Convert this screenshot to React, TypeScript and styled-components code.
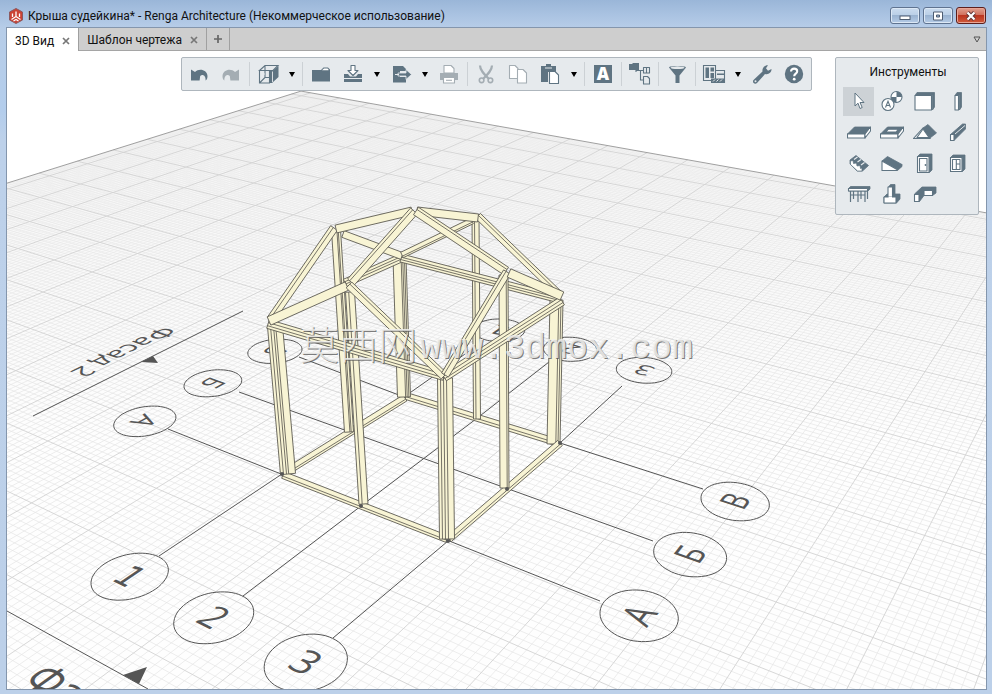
import React from 'react';
import styled, { createGlobalStyle } from 'styled-components';

const INK = '#5f7482';
const MUTED = '#a4adb3';

const GlobalStyle = createGlobalStyle`
  * { box-sizing: border-box; }
  body { margin: 0; font-family: Roboto, "Noto Sans", sans-serif; font-size: 12px; color: #111; }
  button { font: inherit; color: inherit; }
`;

const Frame = styled.div`
  height: 100vh;
  display: flex;
  flex-direction: column;
  padding: 0 5px 4px 6px;
  background: linear-gradient(180deg, #9ab6d8 0, #a9c2e1 14px, #b7cde8 28px, #b3cdec 110px, #bdd1ea 140px, #bcd0e9 100%);
`;

const TitleBar = styled.header`
  height: 27px;
  flex: none;
  display: flex;
  align-items: center;
  gap: 4px;
  padding: 4px 1px 0 2px;
`;

const Title = styled.h1`
  flex: 1;
  margin: 0;
  font-size: 12px;
  font-weight: 400;
  line-height: 20px;
  white-space: nowrap;
`;

const WindowButtons = styled.div`
  display: flex;
  gap: 3px;
`;

const WindowButton = styled.button<{ $danger?: boolean }>`
  width: 30px;
  height: 17px;
  padding: 0;
  display: grid;
  place-items: center;
  border: 1px solid ${p => (p.$danger ? '#5c1f1c' : '#5f7390')};
  border-radius: 3px;
  box-shadow: inset 0 0 0 1px ${p => (p.$danger ? '#e9a595' : '#dce8f5')};
  background: ${p => p.$danger
    ? 'linear-gradient(180deg, #dfa090 0, #d0705c 48%, #bb3520 50%, #cf5a3b 100%)'
    : 'linear-gradient(180deg, #cbdcef 0, #bacfe7 48%, #9ab3d1 50%, #b4cbe6 100%)'};
`;

const Client = styled.div`
  flex: 1;
  min-height: 0;
  display: flex;
  flex-direction: column;
  border: 1px solid #8496ad;
  background: #fff;
`;

const TabBar = styled.nav`
  height: 23px;
  flex: none;
  display: flex;
  background: #cecece;
  border-bottom: 1px solid #a5a5a5;
`;

const Tab = styled.div<{ $active?: boolean }>`
  height: ${p => (p.$active ? 23 : 22)}px;
  display: flex;
  align-items: center;
  gap: 4px;
  padding: 2px 4px 0 8px;
  border-right: 1px solid #a0a0a0;
  background: ${p => (p.$active ? '#fff' : 'transparent')};
`;

const PlainButton = styled.button`
  padding: 0;
  border: 0;
  background: none;
  line-height: 20px;
  white-space: nowrap;
`;

const CloseButton = styled(PlainButton)`
  width: 16px;
  height: 16px;
  display: grid;
  place-items: center;
`;

const AddTab = styled(PlainButton)`
  width: 23px;
  display: grid;
  place-items: center;
  border-right: 1px solid #a0a0a0;
`;

const TabMenu = styled(PlainButton)`
  width: 19px;
  margin-left: auto;
  display: grid;
  place-items: center;
`;

const Viewport = styled.main`
  flex: 1;
  min-height: 0;
  display: grid;
  grid-template: minmax(0, 1fr) / minmax(0, 1fr);
`;

const Scene = styled.svg`
  grid-area: 1 / 1;
  width: 100%;
  height: 100%;
  display: block;
`;

const Overlay = styled.div`
  grid-area: 1 / 1;
  z-index: 1;
  display: flex;
  align-items: flex-start;
  justify-content: flex-end;
  gap: 23px;
  padding: 6px 7px;
`;

const Toolbar = styled.div`
  height: 34px;
  display: flex;
  align-items: center;
  padding: 0 1px;
  border: 1px solid #aeb6bd;
  border-radius: 2px;
  background: #e6eaed;
`;

const ToolButton = styled.button<{ $narrow?: boolean }>`
  width: ${p => (p.$narrow ? 16 : 32)}px;
  height: 30px;
  flex: none;
  padding: 0;
  display: grid;
  place-items: center;
  border: 0;
  background: none;
`;

const Separator = styled.span`
  width: 1px;
  height: 24px;
  flex: none;
  margin: 0 2px;
  background: #ccd1d5;
`;

const Palette = styled.section`
  padding: 0 5px 5px 7px;
  border: 1px solid #aeb6bd;
  border-radius: 2px;
  background: #e6eaed;
`;

const PaletteTitle = styled.h2`
  margin: 0;
  font-size: 12px;
  font-weight: 400;
  line-height: 29px;
  text-align: center;
`;

const PaletteGrid = styled.div`
  display: grid;
  grid-template-columns: repeat(4, 31px);
  grid-auto-rows: 29px;
  gap: 2px;
`;

const PaletteButton = styled.button<{ $selected?: boolean }>`
  padding: 0;
  display: grid;
  place-items: center;
  border: 0;
  background: ${p => (p.$selected ? '#cdd2d6' : 'none')};
`;

/* ---------- icons ---------- */

const Icon = ({ children, color = INK }: { children: React.ReactNode; color?: string }) => (
  <svg width="24" height="24" viewBox="0 0 24 24" fill={color} stroke="none" color={color} aria-hidden="true">{children}</svg>
);
const L = { fill: 'none', stroke: 'currentColor', strokeWidth: 1.1 };
const W = { fill: '#fff', stroke: 'currentColor', strokeWidth: 1.1, strokeLinejoin: 'round' as const };
const F = { fill: 'currentColor', stroke: 'currentColor', strokeWidth: 0.8, strokeLinejoin: 'round' as const };

const arcArrow = 'M4 7.5L8 10C12 6 20 7.5 20.5 14C20.5 16 20 17.5 18.6 18.6C19 13.5 15.5 11.5 13.2 14L12.6 18.6H4Z';

const icons: Record<string, React.ReactNode> = {
  undo: <Icon><path d={arcArrow} /></Icon>,
  redo: <Icon color={MUTED}><path d={arcArrow} transform="matrix(-1 0 0 1 24 0)" /></Icon>,
  view: <Icon><path d="M3.5 8.5L9 3.5H22L17 8.5ZM3.5 8.5H13.5V21H3.5ZM9 3.5V15.500L3.500 21M9 15.500H14" {...L} /><path d="M14 9L16.500 9L22.500 4V15L16 21H13.500Z" /><path d="M16.500 9.500V20M5 12H9" stroke="#e6eaed" strokeWidth="0.9" /></Icon>,
  open: <Icon><path d="M3 8H12L14.500 5.500H19L21 7.500V19.500H3Z" /><path d="M13 8.200L15 6.500H18.500L19.500 7.500V8.200Z" fill="#fff" /></Icon>,
  save: <Icon><path d="M3 12H7L9 14.500H15L17 12H21V20H3Z" /><path d="M3 16.500H21" stroke="#e6eaed" strokeWidth="1" /><path d="M10 3.500H14V8.500H17L12 13.500L7 8.500H10Z" {...W} /></Icon>,
  exp: <Icon><path d="M4 4H14L17 7V9H11V15H17V20.500H4Z" /><path d="M9 11H17V7.500L22.500 12.500L17 17.500V14H9Z" stroke="#e6eaed" strokeWidth="0.800" /><path d="M6 12.500H10" stroke="#e6eaed" /></Icon>,
  print: <Icon color={MUTED}><path d="M3 11H21V18H3Z" /><path d="M7 11V3.500H14L17 6.500V11Z" {...W} /><path d="M6.500 15.500H17.500V21H6.500Z" {...W} /><path d="M9 18.300H15" {...L} /></Icon>,
  cut: <Icon color={MUTED}><path d="M6 3.500C6 8 10 12 14.500 16.500M18 3.500C18 8 14 12 9.500 16.500" {...L} strokeWidth="2.200" /><circle cx="7.600" cy="18.300" r="2.300" {...L} strokeWidth="1.600" /><circle cx="16.400" cy="18.300" r="2.300" {...L} strokeWidth="1.600" /></Icon>,
  copy: <Icon color={MUTED}><path d="M3.500 3.500H9L12 6.500V16.500H3.500Z" {...W} /><path d="M11.500 7.500H17L20.500 11V21H11.500Z" {...W} /></Icon>,
  paste: <Icon><path d="M3 4H8V2H13V4H18V10H10V20H3Z" /><path d="M7 6H14" stroke="#e6eaed" /><path d="M11.500 9.500H17L20.500 13V21.500H11.500Z" {...W} /></Icon>,
  font: <Icon><path d="M3 3H21V21H3Z" /><text x="12" y="18" textAnchor="middle" fill="#fff" fontSize="17" fontWeight="800" fontFamily="Open Sans, sans-serif">A</text></Icon>,
  tree: <Icon><path d="M1 2H4L5 1H11V8H1Z" /><path d="M8 8V10M8 8.500H15" {...L} /><path d="M12.500 8.500V18H15.500" {...L} /><path d="M15.500 5.500H21.500V11H15.500ZM18.500 5.500V11M15.500 14.500H19.500L21.500 16.500V22H15.500Z" {...W} fill="none" /></Icon>,
  filter: <Icon><path d="M4 5.500C4 3.500 21 3.500 21 5.500L14.500 13.500V21H10.500V13.500Z" /><ellipse cx="12.500" cy="5.700" rx="7" ry="1.400" fill="#e6eaed" /></Icon>,
  template: <Icon><path d="M1.500 3.500H13.500V18.500H1.500ZM14 8.500H22.500V20.500H9" {...L} /><path d="M3.500 5.500H7V16H3.500ZM8.500 5.500H12V9.500H8.500ZM8.500 11H12V16H8.500ZM15 11.500H22V13H15ZM9 16.500H22V20.500H9Z" /><path d="M11 19.500L13 17.500M14.500 19.500L16.500 17.500M18 19.500L20 17.500" stroke="#e6eaed" /></Icon>,
  wrench: <Icon><path d="M3 19.500C3 18.500 3.500 18 4 17.500L12.500 9.500C12 6 14.500 3 18 3.200L16 6.200L18 8.700L21.500 7C21.700 10.500 18.500 13 15 12L7 21C5.500 22.300 3 21.500 3 19.500Z" /><circle cx="5.500" cy="19.300" r="1" fill="#e6eaed" /></Icon>,
  help: <Icon><circle cx="12" cy="12" r="9.200" /><path d="M9 9.500C9 5.600 15.200 5.800 15.200 9.300C15.200 11.700 12.200 11.600 12.200 14.200" fill="none" stroke="#fff" strokeWidth="2.100" /><circle cx="12.200" cy="17.200" r="1.400" fill="#fff" /></Icon>,
  cursor: <Icon><path d="M8 3V16L11 13.200L13 18.500L15.200 17.500L13 12.500H17Z" {...W} strokeWidth="1" /></Icon>,
  axis: <Icon><circle cx="16.500" cy="7" r="5.500" {...W} /><path d="M16.500 7V1.500A5.500 5.500 0 0 1 22 7ZM16.500 7V12.500A5.500 5.500 0 0 1 11 7Z" /><circle cx="8" cy="14.500" r="6" {...W} /><path d="M5.500 17.500L8 11.300L10.500 17.500M6.500 15.500H9.500" {...L} /></Icon>,
  wall: <Icon><path d="M2 5.500L4 2.500H21.500V17L19.500 20V5.500Z" {...F} /><path d="M2 5.500H18.500V20H2Z" {...W} /></Icon>,
  column: <Icon><path d="M9 5.500L11 2.500H15.500V17L13.500 20V5.500Z" {...F} /><path d="M9 5.500H12.500V20H9Z" {...W} /></Icon>,
  floor: <Icon><path d="M0.500 13L7.500 6H23.500L18.500 13Z" {...F} /><path d="M0.500 13H18V17H0.500Z" {...W} /><path d="M18 13L23.500 6V10L18 17Z" {...W} /></Icon>,
  opening: <Icon><path d="M0.500 13L7.500 6H23.500L18.500 13Z" {...F} /><path d="M5.500 11L8.500 8.200H18.500L16 11Z" {...W} /><path d="M0.500 13H18V17H0.500Z" {...W} /><path d="M18 13L23.500 6V10L18 17Z" {...W} /></Icon>,
  roof: <Icon><path d="M10 7L15 3.500L23.500 12L17 17Z" {...F} /><path d="M10 7L0.500 17.500H17Z" {...L} /><path d="M10 8L4 16.500H16Z" {...W} /></Icon>,
  beam: <Icon><path d="M4.500 13.500L16.500 3H19.500V8L8 19.500H4.500Z" {...F} /><path d="M4.500 13.500H8V19.500H4.500Z" {...W} /><path d="M9 13L19 4.500" stroke="#e6eaed" /></Icon>,
  stair: <Icon><path d="M3 8L9 3.500L21.500 13.500L15.500 19H10L3 12Z" {...F} /><path d="M3.500 9L6 8.500L6.500 11.500L9.500 11L10 14L13 13.500L13.500 16.500L15 16V19H10.500L3.500 12.500Z" {...W} strokeWidth="0.700" /><path d="M7 7.500L10.500 5M10.500 10L14 7.500M14 13L17.500 10.500" stroke="#e6eaed" strokeWidth="1.200" /></Icon>,
  ramp: <Icon><path d="M2 9L7.500 4.500L22 12.500L17.500 17.500Z" {...F} /><path d="M2 9L17 17.500V18.500H2Z" {...W} /><path d="M17.500 18.500V16.500L22 12.500V14.500Z" {...F} /></Icon>,
  door: <Icon><path d="M4.500 4.500L7 2H19V18L16.500 20.500V4.500Z" {...F} /><path d="M4.500 4.500H16V20.500H4.500ZM6.500 6.500H14V19H6.500Z" {...W} /><circle cx="12.500" cy="13" r="0.900" /></Icon>,
  window: <Icon><path d="M4.500 5.500L7 3H19V17L16.500 19.500V5.500Z" {...F} /><path d="M4.500 5.500H16V19.500H4.500ZM6.500 7.500H14V17.500H6.500ZM10.300 7.500V17.500M10.300 12H14" {...W} /></Icon>,
  railing: <Icon><path d="M1.500 5.500L3.500 3.500H23V6L21 8H1.500Z" {...F} /><path d="M1.500 5.500H20.500V8H1.500Z" {...W} /><path d="M3.500 8V19M6.500 8V16M11 8V19M14 8V16M18 8V19M20.500 8V16M3.500 12H18" {...L} strokeWidth="1.200" /></Icon>,
  foundation: <Icon><path d="M4 14L7 11H20V16L16.500 20H4ZM8.500 4L10.500 1.500H15V12L13 14Z" {...F} /><path d="M8 4H12.500V14H8Z" {...W} /><path d="M4 14H16V20H4Z" {...W} /><path d="M8.600 13.500H12V15H8.600Z" fill="#fff" /></Icon>,
  strip: <Icon><path d="M1.500 11L9 4H23V10L19.500 12.500H11L6.500 18.500H1.500Z" {...F} /><path d="M1.500 11.500H6V18.500H1.500ZM11 7.500H19.500V12.500H11Z" {...W} /></Icon>,
};

const Chevron = () => (
  <svg width="8" height="8" viewBox="0 0 8 8" aria-hidden="true"><path d="M1 2H7L4 7Z" fill="#000" /></svg>
);
const Cross = () => (
  <svg width="8" height="8" viewBox="0 0 8 8" aria-hidden="true"><path d="M1 1L7 7M7 1L1 7" stroke="#777" strokeWidth="1.700" /></svg>
);

/* ---------- ground plane projection ---------- */

type P = [number, number];
const G = -0.0861;
const H = 0.1347;
const U: P = [127.4, 19.4];
const V: P = [176.5, -30.3];
const O: P = [282, 474];

const project = (u: number, v: number): P => {
  const w = 1 + G * u + H * v;
  return [(O[0] + U[0] * u + V[0] * v) / w, (O[1] + U[1] * u + V[1] * v) / w];
};

const unproject = (x: number, y: number): P => {
  const a = U[0] - x * G, b = V[0] - x * H, c = U[1] - y * G, d = V[1] - y * H;
  const e = x - O[0], f = y - O[1], det = a * d - b * c;
  return [(e * d - b * f) / det, (a * f - c * e) / det];
};

const fmt = (p: P) => `${p[0].toFixed(1)} ${p[1].toFixed(1)}`;
const UMIN = -5.01, UMAX = 3.8, VMIN = -2.6, VMAX = 5.79, STEP = 0.404;

const gridPath = (major: boolean) => {
  const step = major ? STEP : STEP / 10;
  let d = '';
  for (let k = Math.ceil((UMIN + 0.023) / step); k * step - 0.023 < UMAX; k++) {
    if (!major && k % 10 === 0) continue;
    const u = k * step - 0.023;
    d += `M${fmt(project(u, VMIN))}L${fmt(project(u, VMAX))}`;
  }
  for (let k = Math.ceil((VMIN + 0.018) / step); k * step - 0.018 < VMAX; k++) {
    if (!major && k % 10 === 0) continue;
    const v = k * step - 0.018;
    d += `M${fmt(project(UMIN, v))}L${fmt(project(UMAX, v))}`;
  }
  return d;
};

const MINOR = gridPath(false);
const MAJOR = gridPath(true);
const FLOOR = 'M' + [project(UMIN, VMIN), project(UMIN, VMAX), project(UMAX, VMAX), project(UMAX, VMIN)].map(fmt).join('L') + 'Z';

type Facing = '+u' | '-u' | '+v' | '-v';

/** Text lying on the ground; `up` is the ground direction its letters point to. */
const GroundText = ({ x, y, up, children, size = 0.175 }: { x: number; y: number; up: Facing; children: string; size?: number }) => {
  const [u, v] = unproject(x, y);
  const w = 1 + G * u + H * v;
  const ju: P = [(U[0] - x * G) / w, (U[1] - y * G) / w];
  const jv: P = [(V[0] - x * H) / w, (V[1] - y * H) / w];
  const sign = up[0] === '+' ? 1 : -1;
  const upv = (up[1] === 'u' ? ju : jv).map(n => n * sign);
  const right = up[1] === 'u' ? jv.map(n => -n * sign) : ju.map(n => n * sign);
  const k = size / 100;
  const m = [right[0] * k, right[1] * k, -upv[0] * k, -upv[1] * k, x, y].map(n => n.toFixed(4)).join(' ');
  return (
    <text transform={`matrix(${m})`} y="36" textAnchor="middle" fontSize="100" fill="#555" fontFamily={children === '1' ? 'DejaVu Sans, sans-serif' : 'Open Sans, sans-serif'}>{children}</text>
  );
};

const AxisMark = ({ x, y, up, label }: { x: number; y: number; up: Facing; label: string }) => {
  const [u, v] = unproject(x, y);
  const pts = Array.from({ length: 60 }, (_, i) => {
    const t = (i / 60) * Math.PI * 2;
    return fmt(project(u + 0.16 * Math.cos(t), v + 0.16 * Math.sin(t)));
  });
  return (
    <g>
      <path d={`M${pts.join('L')}Z`} fill="none" stroke="#555" />
      <GroundText x={x} y={y} up={up}>{label}</GroundText>
    </g>
  );
};

const marks: [number, number, Facing, string][] = [
  [145, 421, '+u', 'А'], [213, 383, '+u', 'Б'], [275, 351, '+u', 'В'],
  [130, 576, '+v', '1'], [214, 617, '+v', '2'], [306, 662, '+v', '3'],
  [639, 615, '-u', 'А'], [690, 554, '-u', 'Б'], [735, 501, '-u', 'В'],
  [499, 330, '-v', '1'], [570, 349, '-v', '2'], [644, 370, '-v', '3'],
];

/* ---------- timber frame ---------- */

type BeamSpec = [number, number, number, number, number, number[]?];

const beams: BeamSpec[] = [
  [406, 396, 556, 442, 7, [0.6]],
  [405, 398, 286, 472, 7, [0.3]],
  [399.5, 258, 404, 397, 13, [0.12, 0.25, 0.38]],
  [475.5, 218, 477, 419, 7, [0.65]],
  [336, 230, 349, 432, 9, [0.25, 0.4]],
  [556.500, 300, 553.500, 444, 13, [0.15, 0.32]],
  [401, 258, 345, 283, 8, [0.35, 0.65]],
  [401, 258, 560, 299, 8, [0.4, 0.7]],
  [343, 234, 402, 256, 7],
  [472, 221, 402, 255, 6, [0.3]],
  [478, 216, 560, 295, 7, [0.4]],
  [271, 319, 334, 228, 8, [0.4]],
  [336, 229, 412, 211, 8],
  [417, 211, 478, 218, 8],
  [283, 475, 447, 539, 7, [0.65]],
  [449, 539, 560, 443, 7, [0.65]],
  [275, 326, 288, 474, 15, [0.45, 0.6, 0.8]],
  [350, 292, 363.500, 504, 9, [0.65]],
  [503.500, 275, 504.500, 488, 9, [0.2]],
  [445, 378, 447, 539, 15, [0.4, 0.6, 0.8]],
  [268, 324, 444, 376, 9, [0.35, 0.7]],
  [444, 377, 562, 301, 9, [0.35, 0.7]],
  [414, 211, 351, 282, 9, [0.7]],
  [416, 211, 506, 271, 9, [0.3]],
  [347, 286, 269, 321, 9],
  [349, 285, 444, 376, 8, [0.35]],
  [507, 272, 445, 375, 8, [0.65]],
  [509, 273, 562, 296, 9],
];

const Beam = ({ spec: [x1, y1, x2, y2, w, inner = []] }: { spec: BeamSpec }) => {
  const len = Math.hypot(x2 - x1, y2 - y1);
  const nx = -(y2 - y1) / len, ny = (x2 - x1) / len;
  const at = (x: number, y: number, t: number) => fmt([x + nx * w * t, y + ny * w * t]);
  return (
    <g>
      <path d={`M${at(x1, y1, -0.5)}L${at(x2, y2, -0.5)}L${at(x2, y2, 0.5)}L${at(x1, y1, 0.5)}Z`} fill="#f8f4d4" stroke="#5e5b52" strokeWidth="0.900" strokeLinejoin="round" />
      {inner.map(t => <path key={t} d={`M${at(x1, y1, t - 0.5)}L${at(x2, y2, t - 0.5)}`} stroke="#68645a" strokeWidth="0.900" />)}
    </g>
  );
};

const WatermarkText = ({ shift, fill, opacity }: { shift: number; fill: string; opacity: number }) => (
  <g fill={fill} opacity={opacity}>
    <text x={300 + shift} y={359 + shift} fontSize="39" fontFamily="Noto Sans CJK SC, sans-serif" fontWeight="300">莫西网</text>
    <text x={420 + shift} y={358 + shift} fontSize="35" fontFamily="Liberation Mono, monospace">www.3dmox.com</text>
  </g>
);

const Drawing = () => (
  <Scene viewBox="7 51 979 638" preserveAspectRatio="xMidYMid slice" role="img" aria-label="3D Вид">
    <defs>
      <linearGradient id="floor" gradientUnits="userSpaceOnUse" x1="0" y1="91" x2="0" y2="450">
        <stop offset="0" stopColor="#f4f4f4" />
        <stop offset="1" stopColor="#fefefe" />
      </linearGradient>
      <linearGradient id="minor" gradientUnits="userSpaceOnUse" x1="0" y1="91" x2="0" y2="400">
        <stop offset="0" stopColor="#ededed" />
        <stop offset="1" stopColor="#e5e5e5" />
      </linearGradient>
    </defs>
    <path d={FLOOR} fill="url(#floor)" />
    <path d={MINOR} fill="none" stroke="url(#minor)" strokeWidth="0.700" />
    <path d={MAJOR} fill="none" stroke="#d2d2d2" strokeWidth="0.900" />
    <path d={FLOOR} fill="none" stroke="#a0a0a0" />
    <path
      d="M168 429L600 601M239 392L653 541M299 357L404 397L560 443L703 489M159 556L282 474L404 397L475 347M243 596L361 506L476 419L549 362M333 638L448 541L560 443L622 386M33 416L243 311M7 611L148 689"
      fill="none" stroke="#555"
    />
    <path d="M141 362L153 356L158 363ZM123 675L147 667L139 684Z" fill="#555" />
    {marks.map(([x, y, up, label]) => <AxisMark key={`${x}-${y}`} x={x} y={y} up={up} label={label} />)}
    <GroundText x={124} y={352} up="+u" size={0.19}>Фасад 2</GroundText>
    <GroundText x={47} y={680} up="+v" size={0.19}>Ф</GroundText>
    <GroundText x={70} y={692} up="+v" size={0.19}>а</GroundText>
    {beams.map((b, i) => <Beam key={i} spec={b} />)}
    <g fill="#555"><circle cx="282" cy="474" r="2" /><circle cx="361" cy="506" r="2" /><circle cx="448" cy="541" r="2" /><circle cx="507" cy="489" r="2" /><circle cx="560" cy="443" r="2" /></g>
    <g aria-hidden="true">
      <WatermarkText shift={1} fill="#555" opacity={0.75} />
    </g>
    <WatermarkText shift={0} fill="#f0f0ee" opacity={0.85} />
  </Scene>
);

const toolbar: [string, string][] = [
  ['undo', 'Отменить'], ['redo', 'Повторить'], ['|', ''], ['view', 'Вид'], ['v', 'Варианты вида'], ['|', ''],
  ['open', 'Открыть'], ['save', 'Сохранить'], ['v', 'Варианты сохранения'], ['exp', 'Экспорт'], ['v', 'Варианты экспорта'],
  ['print', 'Печать'], ['|', ''], ['cut', 'Вырезать'], ['copy', 'Копировать'], ['paste', 'Вставить'], ['v', 'Варианты вставки'],
  ['|', ''], ['font', 'Стили текста'], ['|', ''], ['tree', 'Обозреватель'], ['|', ''], ['filter', 'Фильтр'], ['|', ''],
  ['template', 'Шаблоны'], ['v', 'Варианты шаблонов'], ['wrench', 'Настройки'], ['help', 'Справка'],
];

const tools: [string, string][] = [
  ['cursor', 'Выбор'], ['axis', 'Ось'], ['wall', 'Стена'], ['column', 'Колонна'],
  ['floor', 'Перекрытие'], ['opening', 'Проём'], ['roof', 'Крыша'], ['beam', 'Балка'],
  ['stair', 'Лестница'], ['ramp', 'Пандус'], ['door', 'Дверь'], ['window', 'Окно'],
  ['railing', 'Ограждение'], ['foundation', 'Столбчатый фундамент'], ['strip', 'Ленточный фундамент'],
];

export default function App() {
  return (
    <>
      <GlobalStyle />
      <Frame>
        <TitleBar>
          <svg width="16" height="16" viewBox="0 0 16 16" aria-hidden="true">
            <path d="M8 0.500L14.500 4V12L8 15.500L1.500 12V4Z" fill="#cb4335" stroke="#8c5a60" />
            <path d="M8 3.500V8.500M8 8.500L3.500 11.500M8 8.500L12.500 11.500M4.500 5.500V9M11.500 5.500V9M5.500 13L8 11.500L10.500 13" stroke="#fff" strokeWidth="1.300" fill="none" />
          </svg>
          <Title>Крыша судейкина* - Renga Architecture (Некоммерческое использование)</Title>
          <WindowButtons>
            <WindowButton aria-label="Свернуть">
              <svg width="12" height="10" viewBox="0 0 12 10"><rect x="1" y="5" width="10" height="3.500" fill="#fff" stroke="#4e5d72" /></svg>
            </WindowButton>
            <WindowButton aria-label="Развернуть">
              <svg width="12" height="10" viewBox="0 0 12 10"><path d="M1.500 1H10.500V9H1.500ZM4.500 4V6H7.500V4Z" fill="#fff" stroke="#4e5d72" fillRule="evenodd" /></svg>
            </WindowButton>
            <WindowButton aria-label="Закрыть" $danger>
              <svg width="12" height="10" viewBox="0 0 12 10"><path d="M2.500 1.500L9.500 8.500M9.500 1.500L2.500 8.500" stroke="#5e3535" strokeWidth="4" /><path d="M2.500 1.500L9.500 8.500M9.500 1.500L2.500 8.500" stroke="#fff" strokeWidth="2.200" /></svg>
            </WindowButton>
          </WindowButtons>
        </TitleBar>
        <Client>
          <TabBar>
            <Tab $active><PlainButton>3D Вид</PlainButton><CloseButton aria-label="Закрыть 3D Вид"><Cross /></CloseButton></Tab>
            <Tab><PlainButton>Шаблон чертежа</PlainButton><CloseButton aria-label="Закрыть Шаблон чертежа"><Cross /></CloseButton></Tab>
            <AddTab aria-label="Новая вкладка"><svg width="10" height="10" viewBox="0 0 10 10"><path d="M5 1V9M1 5H9" stroke="#666" strokeWidth="1.700" /></svg></AddTab>
            <TabMenu aria-label="Список вкладок"><svg width="8" height="7" viewBox="0 0 8 7"><path d="M1 1H7L4 6Z" fill="none" stroke="#555" /></svg></TabMenu>
          </TabBar>
          <Viewport>
            <Drawing />
            <Overlay>
              <Toolbar role="toolbar">
                {toolbar.map(([id, label], i) => id === '|'
                  ? <Separator key={i} />
                  : <ToolButton key={i} $narrow={id === 'v'} aria-label={label}>{id === 'v' ? <Chevron /> : icons[id]}</ToolButton>)}
              </Toolbar>
              <Palette>
                <PaletteTitle>Инструменты</PaletteTitle>
                <PaletteGrid>
                  {tools.map(([id, label]) => <PaletteButton key={id} aria-label={label} $selected={id === 'cursor'}>{icons[id]}</PaletteButton>)}
                </PaletteGrid>
              </Palette>
            </Overlay>
          </Viewport>
        </Client>
      </Frame>
    </>
  );
}
